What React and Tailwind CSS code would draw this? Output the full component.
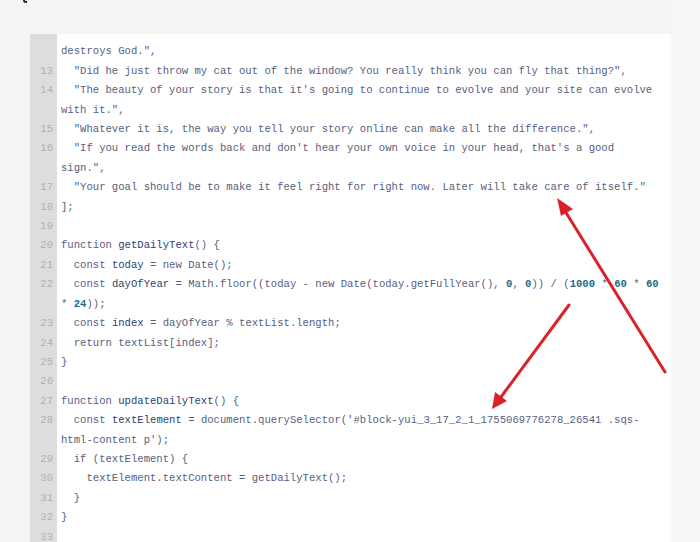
const base = 'text-[#576080]';
const ident = 'text-[#2c4270]';
const num = 'text-[#1d6d88] font-bold';

// each row: [lineNumber, tokens]; tokens are [text, className]
// first row sits mostly above the panel edge, only its descenders peek through
const rows = [
  [null, [['  "Not my dream is to build a whole world in one lazy afternoon. It ', base]]],
  [null, [['destroys God.",', base]]],
  [13, [['  "Did he just throw my cat out of the window? You really think you can fly that thing?",', base]]],
  [14, [['  "The beauty of your story is that it\'s going to continue to evolve and your site can evolve with it.",', base]]],
  [15, [['  "Whatever it is, the way you tell your story online can make all the difference.",', base]]],
  [16, [['  "If you read the words back and don\'t hear your own voice in your head, that\'s a good sign.",', base]]],
  [17, [['  "Your goal should be to make it feel right for right now. Later will take care of itself."', base]]],
  [18, [['];', base]]],
  [19, [['', base]]],
  [20, [['function ', base], ['getDailyText', ident], ['() {', base]]],
  [21, [['  const ', base], ['today', ident], [' = new Date();', base]]],
  [22, [
    ['  const ', base], ['dayOfYear', ident], [' = Math.floor((today - new Date(today.getFullYear(), ', base],
    ['0', num], [', ', base], ['0', num], [')) / (', base], ['1000', num], [' * ', base], ['60', num],
    [' * ', base], ['60', num], [' * ', base], ['24', num], ['));', base],
  ]],
  [23, [['  const ', base], ['index', ident], [' = dayOfYear % textList.length;', base]]],
  [24, [['  return textList[index];', base]]],
  [25, [['}', base]]],
  [26, [['', base]]],
  [27, [['function ', base], ['updateDailyText', ident], ['() {', base]]],
  [28, [['  const ', base], ['textElement', ident], [" = document.querySelector('#block-yui_3_17_2_1_1755069776278_26541 .sqs-html-content p');", base]]],
  [29, [['  if (textElement) {', base]]],
  [30, [['    textElement.textContent = getDailyText();', base]]],
  [31, [['  }', base]]],
  [32, [['}', base]]],
  [33, [['', base]]],
  [34, [['', base]]],
];

function CodeRow({ n, tokens, first }) {
  return (
    <div className={first ? 'flex leading-[26px]' : 'flex'}>
      <div className="w-[27px] shrink-0 bg-[#dddddd] pr-[4px] text-right text-[#b2b2b2]">
        {n ?? ''}
      </div>
      <div className="min-w-0 flex-1 whitespace-pre-wrap pl-[4px] pr-[7px]">
        {tokens.map(([t, c], i) => (
          <span key={i} className={c}>{t}</span>
        ))}
        {tokens.every(([t]) => t === '') && '\u00a0'}
      </div>
    </div>
  );
}

function Arrows() {
  return (
    <svg className="pointer-events-none absolute inset-0" width="700" height="542" viewBox="0 0 700 542">
      <g stroke="#d8232a" strokeWidth="3" strokeLinecap="round" fill="none">
        <line x1="665" y1="372" x2="565" y2="211" />
        <line x1="569" y1="305" x2="501" y2="397" />
      </g>
      <g fill="#d8232a">
        <polygon points="557,198 573,209 561,216" />
        <polygon points="492,409 495,392 507,401" />
      </g>
    </svg>
  );
}

export default function App() {
  return (
    <div className="relative flex h-[542px] w-[700px] overflow-hidden bg-[#f4f4f4] font-['Liberation_Mono',monospace] text-[10.6px] leading-[19.4px]">
      <div className="flex w-[671px] flex-col">
        <div className="h-[34px] shrink-0">
          <div className="ml-[23px] h-[3px] w-[4px] rounded-bl-full border-b-2 border-l-2 border-[#222]" />
        </div>
        <div className="ml-[30px] flex-1 overflow-hidden bg-[linear-gradient(to_right,#dddddd_27px,#ffffff_27px)]">
          <div className="-mt-[17.6px]">
            {rows.map(([n, tokens], i) => (
              <CodeRow key={i} n={n} tokens={tokens} first={i === 0} />
            ))}
          </div>
        </div>
      </div>
      <div className="w-[29px] bg-[#f8f8f8]" />
      <Arrows />
    </div>
  );
}
